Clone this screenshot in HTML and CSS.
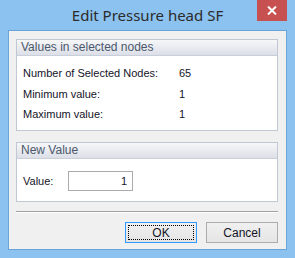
FILE: index.html
```html
<!DOCTYPE html>
<html lang="en">
<head>
    <meta charset="UTF-8">
    <title>Edit Pressure head SF</title>
    <link rel="stylesheet" href="styles.css">
</head>
<body>
    <div class="window">
        <div class="titlebar">
            <span></span>
            <span class="title">Edit Pressure head SF</span>
            <button class="close" aria-label="Close">
                <svg width="10" height="9" viewBox="0 0 10 9">
                    <path d="M1 0.5 L9 8.5 M9 0.5 L1 8.5" stroke="#fff" stroke-width="2"/>
                </svg>
            </button>
        </div>

        <div class="client">
            <div class="group group-values">
                <div class="group-header">Values in selected nodes</div>
                <div class="group-body">
                    <div class="row"><span class="label">Number of Selected Nodes:</span><span>65</span></div>
                    <div class="row"><span class="label">Minimum value:</span><span>1</span></div>
                    <div class="row"><span class="label">Maximum value:</span><span>1</span></div>
                </div>
            </div>

            <div class="group group-new">
                <div class="group-header">New Value</div>
                <div class="group-body new-body">
                    <span class="value-label">Value:</span>
                    <input class="value-input" type="text" value="1">
                </div>
            </div>

            <div class="separator"></div>

            <div class="buttons">
                <button class="btn btn-default"><span class="focus">OK</span></button>
                <button class="btn">Cancel</button>
            </div>
        </div>
    </div>
</body>
</html>
```

FILE: styles.css
```css
body {
    margin: 0;
    font-family: "Liberation Sans", Arial, sans-serif;
    font-size: 11px;
    color: #141428;
}
.window {
    width: 295px;
    height: 258px;
    background-color: #8bc2f0;
    display: flex;
    flex-direction: column;
}
.titlebar {
    height: 30px;
    display: grid;
    grid-template-columns: 1fr auto 1fr;
}
.title {
    font-family: "Noto Sans", sans-serif;
    font-size: 15px;
    color: #2b2b2b;
    line-height: 30px;
}
.close {
    justify-self: end;
    align-self: start;
    width: 30px;
    height: 21px;
    margin-right: 8px;
    padding: 0;
    border: none;
    background-color: #c75050;
    display: flex;
    align-items: center;
    justify-content: center;
}
.client {
    margin: 0 8px 8px 8px;
    height: 220px;
    box-sizing: border-box;
    background-color: #f0f0f0;
    border: 1px solid #6aa4d8;
    padding: 8px 8px 0 7px;
}
.group {
    border: 1px solid #c1c7d3;
    background-color: white;
    width: 262px;
    box-sizing: border-box;
}
.group-header {
    height: 16px;
    line-height: 15px;
    padding-left: 4px;
    background: linear-gradient(#f6f7f9, #dcdfe7);
    border-bottom: 1px solid #c9cedb;
    box-sizing: border-box;
    color: #4b586c;
    font-size: 12px;
}
.group-values {
    height: 92px;
}
.group-values .group-body {
    padding: 7px 0 0 6px;
}
.row {
    display: flex;
    height: 20.5px;
    line-height: 20px;
}
.label {
    width: 156px;
}
.group-new {
    height: 60px;
    margin-top: 11px;
}
.new-body {
    display: flex;
    align-items: center;
    padding: 12px 0 0 6px;
}
.value-label {
    width: 45px;
}
.value-input {
    width: 65px;
    height: 20px;
    box-sizing: border-box;
    border: 1px solid #ababab;
    text-align: right;
    padding: 0 5px;
    font: inherit;
    color: inherit;
}
.separator {
    width: 262px;
    margin-top: 9px;
    border-top: 1px solid #a0a0a0;
    border-bottom: 1px solid #ffffff;
}
.buttons {
    display: flex;
    justify-content: flex-end;
    gap: 9px;
    width: 262px;
    margin-top: 9px;
}
.btn {
    width: 72px;
    height: 21px;
    padding: 0;
    border: 1px solid #acacac;
    background: linear-gradient(#f0f0f0, #e5e5e5);
    font: inherit;
    font-size: 12px;
    color: inherit;
}
.btn-default {
    border-color: #3399ff;
    padding: 2px;
}
.focus {
    display: block;
    height: 100%;
    box-sizing: border-box;
    border: 1px dotted #000;
    line-height: 15px;
}
```
